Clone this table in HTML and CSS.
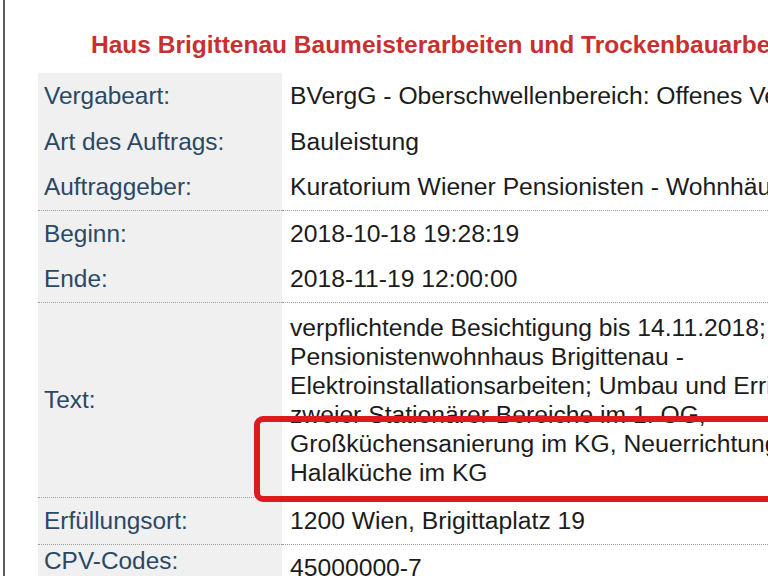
FILE: index.html
```html
<!DOCTYPE html>
<html lang="de">
<head>
<meta charset="utf-8">
<title>Haus Brigittenau</title>
<link rel="stylesheet" href="styles.css">
</head>
<body>
<div class="frame">
  <h1 class="title">Haus Brigittenau Baumeisterarbeiten und Trockenbauarbeiten</h1>
  <div class="sheet">
    <table class="info">
      <tr class="r-top"><th>Vergabeart:</th><td>BVergG - Oberschwellenbereich: Offenes Verfahren</td></tr>
      <tr><th>Art des Auftrags:</th><td>Bauleistung</td></tr>
      <tr><th>Auftraggeber:</th><td>Kuratorium Wiener Pensionisten - Wohnhäuser</td></tr>
      <tr class="sep"><th>Beginn:</th><td>2018-10-18 19:28:19</td></tr>
      <tr><th>Ende:</th><td>2018-11-19 12:00:00</td></tr>
      <tr class="sep text-row"><th>Text:</th><td>verpflichtende Besichtigung bis 14.11.2018;<br>Pensionistenwohnhaus Brigittenau -<br>Elektroinstallationsarbeiten; Umbau und Errichtung<br>zweier Stationärer Bereiche im 1. OG,<br>Großküchensanierung im KG, Neuerrichtung einer<br>Halalküche im KG</td></tr>
      <tr class="sep place-row"><th>Erfüllungsort:</th><td>1200 Wien, Brigittaplatz 19</td></tr>
      <tr class="sep cpv-row"><th>CPV-Codes:</th><td>45000000-7</td></tr>
    </table>
    <div class="highlight"></div>
  </div>
</div>
</body>
</html>
```

FILE: styles.css
```css
html, body {
  margin: 0;
  padding: 0;
  overflow: hidden;
  background: #ffffff;
}

.frame {
  margin-left: 3px;
  border-left: 2px solid #5b5b5b;
  height: 576px;
  padding-left: 33px;
  font-family: "Liberation Sans", Arial, sans-serif;
  overflow: hidden;
}

.title {
  margin: 0;
  padding-top: 31px;
  padding-left: 53px;
  font-size: 24.5px;
  line-height: 28px;
  font-weight: bold;
  color: #c8302f;
  white-space: nowrap;
}

.sheet {
  position: relative;
  margin-top: 14px;
  width: 1100px;
}

.info {
  border-collapse: collapse;
  width: 1100px;
  font-size: 24.4px;
}

.info th,
.info td {
  padding-top: 9px;
  padding-bottom: 9px;
  line-height: 27.5px;
  vertical-align: middle;
  white-space: nowrap;
}

.info th {
  width: 238px;
  padding-left: 6px;
  padding-right: 0;
  background: #f0f0f0;
  text-align: left;
  font-weight: normal;
  color: #2a4866;
}

.info td {
  padding-left: 8px;
  padding-right: 0;
  font-size: 24.7px;
  color: #1c1c1c;
}

.info tr.sep th,
.info tr.sep td {
  border-top: 1px dotted #9c9c9c;
}

.info tr.text-row td {
  padding-top: 10px;
  padding-bottom: 10px;
  line-height: 29px;
}

.info tr.place-row th,
.info tr.place-row td {
  line-height: 28px;
}

.info tr.cpv-row th {
  vertical-align: top;
  padding-top: 2px;
  line-height: 28px;
}

.info tr.cpv-row td {
  vertical-align: top;
  padding-top: 9px;
  line-height: 28px;
}

.highlight {
  position: absolute;
  left: 216px;
  top: 343px;
  width: 700px;
  height: 86px;
  box-sizing: border-box;
  border: 6px solid #dc1a22;
  border-radius: 9px;
}
```
